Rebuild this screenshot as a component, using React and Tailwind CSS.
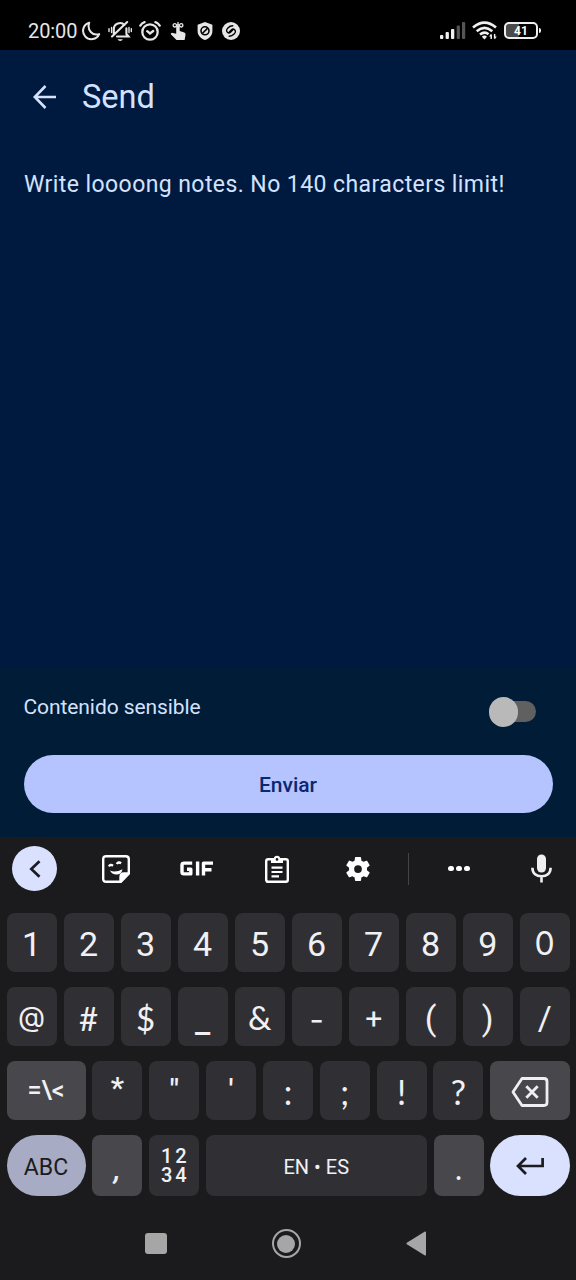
import React from 'react';

function StatusBar() {
  return (
    <div className="flex h-[50px] items-center bg-black pt-[11px] pl-[28px] pr-[35px] text-[#e6e6e6]">
      <span className="w-[50px] pt-px text-[20px] leading-[20px] tracking-[-0.1px] whitespace-nowrap">20:00</span>
      <svg className="ml-[3px] h-5 w-5 shrink-0" viewBox="0 0 20 20" fill="none" stroke="currentColor" strokeWidth="2" strokeLinejoin="round">
        <path d="M8.2 1.7A8.4 8.4 0 1 0 18.2 13.1C11.5 15.3 5.8 9 8.2 1.7Z" />
      </svg>
      <svg className="ml-[7px] h-[22px] w-6 shrink-0" viewBox="0 0 24 22" fill="none" stroke="currentColor" strokeWidth="2.1" strokeLinecap="round">
        <path d="M5.8 14V9.5C5.8 3.4 13 1.2 16.5 5M18.4 8.4V14L20.5 16.5H9M4 16.5L19.2 2" />
        <path d="M3.6 7.5v5M1 8.6v3M21 7.5v5M23.3 8.6v3" strokeWidth="1.4" />
        <path d="M9.5 19.2h5.4q-.8 1.8-2.7 1.8t-2.7-1.8Z" fill="currentColor" stroke="none" />
      </svg>
      <svg className="ml-[7px] h-5 w-[22px] shrink-0" viewBox="0 0 22 20" fill="none" stroke="currentColor" strokeWidth="2.3" strokeLinecap="round">
        <circle cx="11" cy="11" r="7.7" />
        <path d="M1.3 4.6Q3 2 5.6 1.2M20.7 4.6Q19 2 16.4 1.2M8.2 10.2l2.8 2.3 3.2-2.5" />
      </svg>
      <svg className="ml-[9px] h-5 w-4 shrink-0" viewBox="0 0 16 20" fill="currentColor">
        <path d="M6.2 5q1.8-1 3.5 0v5l4.6 1.6q1.5.8 1.2 2.3l-.9 5.1H6.5L.6 12.9l1.2-1.2 4.4 1Z" />
        <g fill="none" stroke="currentColor" strokeWidth="1.3">
          <circle cx="4.8" cy="4.3" r="1.7" /><circle cx="11.2" cy="4.3" r="1.7" /><path d="M6 4h4M8 1v4" />
        </g>
      </svg>
      <svg className="ml-[11px] h-[18px] w-4 shrink-0" viewBox="0 0 16 18">
        <path d="M8 0L15.4 2.8V9C15.4 13.5 12 16.8 8 18C4 16.8.6 13.5.6 9V2.8Z" fill="#e6e6e6" />
        <circle cx="8" cy="8.8" r="4" fill="none" stroke="#000" strokeWidth="1.6" />
        <path d="M5.3 11.5L10.7 6.1" stroke="#000" strokeWidth="1.6" />
      </svg>
      <svg className="ml-[9px] h-[18px] w-[18px] shrink-0" viewBox="0 0 18 18">
        <circle cx="9" cy="9" r="9" fill="#e6e6e6" />
        <path d="M10.8 3.7Q8 3.7 5.9 5.9Q3.5 8.4 5.4 10.2Q7 11.6 8.5 10.2L10.7 8M7.2 14.3Q10 14.3 12.1 12.1Q14.5 9.6 12.6 7.8Q11 6.4 9.5 7.8L7.3 10" fill="none" stroke="#000" strokeWidth="1.4" strokeLinecap="round" />
      </svg>
      <svg className="ml-auto h-[17px] w-[26px] shrink-0" viewBox="0 0 26 17" fill="#f0f0f0">
        <rect x="0" y="13" width="3.3" height="4" rx="1" /><rect x="5.6" y="10" width="3.3" height="7" rx="1" /><rect x="11" y="7" width="3.3" height="10" rx="1" />
        <g fill="#555"><rect x="16.7" y="3.5" width="3.2" height="13.5" rx="1" /><rect x="22" y="0" width="3.2" height="17" rx="1" /></g>
      </svg>
      <svg className="ml-[6px] h-[19px] w-[26px] shrink-0" viewBox="0 0 26 19" fill="none" stroke="#f0f0f0" strokeWidth="2.6">
        <path d="M1 6.5Q12.5-3.3 24 6.5M4.7 10.2Q12.5 3.7 20.3 10.2M8 13.6Q12.5 9.8 16.5 13.2" />
        <path d="M9.8 15.7Q12.5 13.5 15 15.7L12.5 18.5Z" fill="#f0f0f0" stroke="none" />
        <path d="M19.2 18v-4.5M22.6 13v4.5" strokeWidth="1.5" />
        <path d="M17 15.5l2.2-2.8v2.8ZM22.6 15.5h2.2l-2.2 3Z" fill="#f0f0f0" stroke="none" />
      </svg>
      <div className="ml-[6px] flex shrink-0 items-center">
        <div className="flex h-[17px] w-[34px] items-center justify-center rounded-[5px] border-2 border-[#eeeeee] bg-linear-to-r from-[#4a4a4a] from-42% to-black to-42% text-[12px] font-bold leading-none text-white">41</div>
        <div className="ml-px h-[5px] w-[2px] rounded-r bg-[#eeeeee]" />
      </div>
    </div>
  );
}

// Glyph shapes that differ from the base key font.
const glyphs = {
  0: 'font-[Inter] text-[32px]',
  '@': 'font-[Inter] text-[28px] pb-0.5',
  '#': 'font-[Lato] text-[33px]',
  $: 'font-[Lato] text-[33px]',
  '&': 'font-[Lato] text-[33px] pb-0.5',
  _: 'font-[Roboto] text-[34px] font-medium pt-1',
  '-': 'font-[Inter] text-[31px] pt-0.5',
  '+': 'font-[Roboto] text-[30px] pt-0.5',
  '*': 'font-[Roboto] text-[30px] font-medium pb-2',
  '"': 'font-[Roboto] text-[30px] font-medium pb-1',
  "'": 'font-[Roboto] text-[30px] font-medium pb-1',
  ':': 'font-[Lato] text-[34px]',
  ';': 'font-[Lato] text-[34px]',
  '!': 'font-[Lato] text-[34px]',
  '?': 'font-[Lato] text-[34px]',
};

function Key({ char }) {
  return (
    <div className="flex h-full min-w-0 flex-1 items-center justify-center rounded-[8px] bg-[#303034] pt-[3px]">
      <span className={glyphs[char] || ''}>{char}</span>
    </div>
  );
}

function Toolbar() {
  return (
    <div className="flex h-[76px] items-center pb-[13px] pl-[12px] text-white">
      <div className="flex h-[45px] w-[45px] items-center justify-center rounded-full bg-[#d9e1ff]">
        <svg className="h-[18px] w-[12px]" viewBox="0 0 12 18" fill="none" stroke="#1b1b20" strokeWidth="2.7"><path d="M10.5 1.2L2.3 9l8.2 7.8" /></svg>
      </div>
      <svg className="ml-[44.5px] h-7 w-7" viewBox="0 0 28 28" fill="none" stroke="white" strokeWidth="2.4" strokeLinejoin="round">
        <path d="M18.5 26.8H4.2Q1.2 26.8 1.2 23.8V4.2Q1.2 1.2 4.2 1.2H23.8Q26.8 1.2 26.8 4.2V18.5Z" />
        <path d="M18.5 26.8V22Q18.5 18.5 22 18.5H26.8Z" fill="white" />
        <path d="M8 15.5Q13.5 17.8 20.5 14.2Q19.5 19.4 14.7 19.6Q9.8 19.7 8 15.5Z" fill="white" stroke="none" />
        <path d="M7 11.5q1.2-2.8 4-.8M14.8 9q1.5-2.6 4.3-.8" />
      </svg>
      <svg className="ml-[50px] h-[15px] w-[34px]" viewBox="0 0 34 15" fill="none" stroke="white" strokeWidth="3.4" strokeLinejoin="round">
        <path d="M12.2 2.1H4Q2 2.1 2 4V11Q2 12.9 4 12.9H10.8V8.2H7" /><path d="M17.6.5v14M23.5 14.5V2.1H33M23.5 8.7h8" />
      </svg>
      <svg className="ml-[51.5px] h-7 w-6" viewBox="0 0 24 28" fill="none" stroke="white" strokeWidth="2.4" strokeLinejoin="round">
        <path d="M3.2 4.2H20.8Q22.8 4.2 22.8 6.2V24.8Q22.8 26.8 20.8 26.8H3.2Q1.2 26.8 1.2 24.8V6.2Q1.2 4.2 3.2 4.2Z" />
        <path d="M6 4V8H18V4H15.2Q15 .8 12 .8T8.8 4Z" fill="white" stroke="none" /><circle cx="12" cy="4.4" r="1.3" fill="#1b1b1d" stroke="none" />
        <path d="M6.5 12.7h11M6.5 17h11M6.5 21.3h7.5" strokeWidth="2.2" />
      </svg>
      <svg className="ml-[54px] h-[30px] w-[30px]" viewBox="0 0 24 24" fill="white">
        <path d="M19.14 12.94c.04-.3.06-.61.06-.94 0-.32-.02-.64-.07-.94l2.03-1.58c.18-.14.23-.41.12-.61l-1.92-3.32c-.12-.22-.37-.29-.59-.22l-2.39.96c-.5-.38-1.03-.7-1.62-.94L14.4 2.81c-.04-.24-.24-.41-.48-.41h-3.84c-.24 0-.43.17-.47.41l-.36 2.54c-.59.24-1.13.57-1.62.94l-2.39-.96c-.22-.08-.47 0-.59.22L2.74 8.87c-.12.21-.08.47.12.61l2.03 1.58c-.05.3-.09.63-.09.94s.02.64.07.94l-2.03 1.58c-.18.14-.23.41-.12.61l1.92 3.32c.12.22.37.29.59.22l2.39-.96c.5.38 1.03.7 1.62.94l.36 2.54c.05.24.24.41.48.41h3.84c.24 0 .44-.17.47-.41l.36-2.54c.59-.24 1.13-.56 1.62-.94l2.39.96c.22.08.47 0 .59-.22l1.92-3.32c.12-.22.07-.47-.12-.61l-2.01-1.58zM12 15.1A3.1 3.1 0 1 1 12 8.9a3.1 3.1 0 0 1 0 6.2z" />
      </svg>
      <div className="ml-[35px] h-8 w-px bg-[#444447]" />
      <div className="ml-[39px] flex gap-[2.5px]">
        <span className="h-[5.5px] w-[5.5px] rounded-full bg-white" /><span className="h-[5.5px] w-[5.5px] rounded-full bg-white" /><span className="h-[5.5px] w-[5.5px] rounded-full bg-white" />
      </div>
      <svg className="ml-[61px] h-[29px] w-[21px]" viewBox="0 0 21 29" fill="none" stroke="#eeeef3" strokeWidth="2.6">
        <rect x="6" y=".5" width="9" height="18" rx="4.5" fill="#eeeef3" stroke="none" />
        <path d="M1.4 13.8C1.4 19.5 5.4 22.2 10.5 22.2S19.6 19.5 19.6 13.8M10.5 22.8V28.5" />
      </svg>
    </div>
  );
}

const rowClass = 'flex h-[59px] gap-[6.9px]';

function Keyboard() {
  return (
    <div className="h-[443px] bg-[#1b1b1d] text-[#f0f0f5]">
      <Toolbar />
      <div className="flex flex-col gap-[15px] pr-[6.2px] pl-[6.5px] text-[34px] leading-none">
        <div className={rowClass}>{'1234567890'.split('').map((k) => <Key key={k} char={k} />)}</div>
        <div className={rowClass}>{'@#$_&-+()/'.split('').map((k) => <Key key={k} char={k} />)}</div>
        <div className={rowClass}>
          <div className="flex w-[79px] shrink-0 items-center justify-center rounded-[8px] bg-[#48484c] text-[25px] font-medium">=\&lt;</div>
          {'*"\':;!?'.split('').map((k) => <Key key={k} char={k} />)}
          <div className="flex w-[79.5px] shrink-0 items-center justify-center rounded-[8px] bg-[#48484c] pt-0.5">
            <svg className="h-[30px] w-[38px]" viewBox="0 0 38 30" fill="none" stroke="#eeeef3" strokeWidth="2.8" strokeLinejoin="round"><path d="M11 1.5H33Q36 1.5 36 4.5V25.5Q36 28.5 33 28.5H11L2 15ZM15.3 9.3L26.7 20.7M26.7 9.3L15.3 20.7" /></svg>
          </div>
        </div>
        <div className="flex h-[61px] gap-[6.7px]">
          <div className="flex w-[79px] shrink-0 items-center justify-center rounded-full bg-[#a8abc4] pt-[3px] text-[23px] text-[#1b1b20]">ABC</div>
          <div className="flex w-[50px] shrink-0 items-center justify-center rounded-[8px] bg-[#48484c] pt-1.5 text-[30px] font-medium italic">,</div>
          <div className="flex w-[50px] shrink-0 flex-col items-center justify-center rounded-[8px] bg-[#303034] text-[20px] font-medium leading-[19px]"><span className="pl-[3px] tracking-[3px]">12</span><span className="pl-[3px] tracking-[3px]">34</span></div>
          <div className="flex flex-1 items-center justify-center rounded-[8px] bg-[#303034] pt-[2px] text-[20px]">EN • ES</div>
          <div className="flex w-[50px] shrink-0 items-center justify-center rounded-[8px] bg-[#48484c] pt-1 font-[Lato] text-[30px]">.</div>
          <div className="flex w-[79.5px] shrink-0 items-center justify-center rounded-full bg-[#d9e1ff] pt-px">
            <svg className="h-[18px] w-[28px]" viewBox="0 0 28 18" fill="none" stroke="#1b1b20" strokeWidth="2.7"><path d="M10 1L2 9l8 8M2 9H26.6V1" /></svg>
          </div>
        </div>
      </div>
      <div className="flex h-[84px] items-center pt-[11px] pl-[145px]">
        <div className="h-[21.5px] w-[21.5px] rounded-[3px] bg-[#a6a6a6]" />
        <div className="ml-[105px] flex h-[29px] w-[29px] items-center justify-center rounded-full border-2 border-[#a6a6a6]"><div className="h-[18px] w-[18px] rounded-full bg-[#a6a6a6]" /></div>
        <svg className="ml-[105px] h-[25px] w-5" viewBox="0 0 20 25"><path d="M18.5.8Q20 .2 20 1.5V23.5Q20 24.8 18.5 24.2L.8 13.3Q0 12.5.8 11.7Z" fill="#a6a6a6" /></svg>
      </div>
    </div>
  );
}

export default function App() {
  return (
    <div className="h-[1280px] w-[576px] overflow-hidden bg-[#001a3f] font-[Roboto,sans-serif]">
      <StatusBar />
      <main className="h-[618px] bg-[#001a3f] text-[#d3e2ff]">
        <header className="flex h-[94px] items-center pl-[33px]">
          <svg className="h-6 w-6" viewBox="0 0 24 24" fill="none" stroke="currentColor" strokeWidth="2.6"><path d="M12.5 1L1.8 12l10.7 11M1.8 12H23" /></svg>
          <h1 className="ml-[25px] pt-px text-[32.5px] leading-none">Send</h1>
        </header>
        <p className="pt-[27px] pl-6 text-[23px] leading-7 tracking-[0.42px] whitespace-nowrap">Write loooong notes. No 140 characters limit!</p>
      </main>
      <section className="flex h-[169px] flex-col bg-[#001c36] px-[23.5px]">
        <div className="flex h-[87px] items-center justify-between pr-[17px]">
          <span className="pb-[7px] text-[21px] tracking-[-0.08px] text-[#d3e2ff]">Contenido sensible</span>
          <div className="relative h-[21px] w-[42px] rounded-full bg-[#606060]"><div className="absolute top-[-4px] left-[-5px] h-[29.5px] w-[29.5px] rounded-full bg-[#b9b9b9]" /></div>
        </div>
        <button className="h-[58px] w-[529px] rounded-full bg-[#b5c3ff] pt-[4px] text-[21px] font-medium text-[#09286f]">Enviar</button>
      </section>
      <Keyboard />
    </div>
  );
}
